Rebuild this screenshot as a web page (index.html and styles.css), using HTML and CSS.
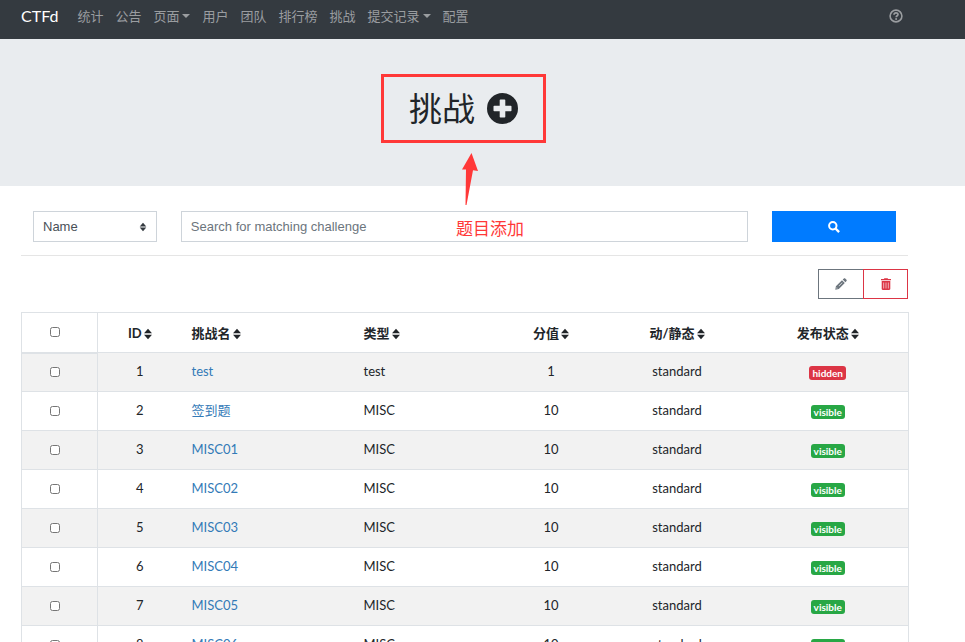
FILE: index.html
```html
<!DOCTYPE html>
<html lang="zh-CN">
<head>
<meta charset="utf-8">
<title>CTFd</title>
<link rel="stylesheet" href="styles.css">
</head>
<body>
<svg class="defs" aria-hidden="true">
  <symbol id="sort" viewBox="0 0 8 12"><path d="M4 .8L8 5.200H0zM4 11.200L0 6.800h8z"/></symbol>
</svg>
<header class="navbar">
  <a class="brand" href="#">CTFd</a>
  <nav class="nav">
    <a href="#">统计</a>
    <a href="#">公告</a>
    <a href="#" class="dropdown">页面</a>
    <a href="#">用户</a>
    <a href="#">团队</a>
    <a href="#">排行榜</a>
    <a href="#">挑战</a>
    <a href="#" class="dropdown">提交记录</a>
    <a href="#">配置</a>
  </nav>
  <a class="help" href="#" aria-label="Help">
    <svg viewBox="0 0 14 14"><circle cx="7" cy="7" r="5.9" fill="none" stroke="currentColor" stroke-width="1.6"/><path d="M5 5.700C5.100 4.400 5.900 3.800 7 3.800c1.200 0 2 .7 2 1.700C9 6.800 7.200 6.700 7.200 8.200" fill="none" stroke="currentColor" stroke-width="1.700"/><circle cx="7.100" cy="10" r="1" fill="currentColor"/></svg>
  </a>
</header>
<main>
  <section class="jumbotron">
    <div class="title">
      <h1>挑战</h1>
      <a class="add" href="#" aria-label="Add challenge">
        <svg viewBox="0 0 31 31"><path fill="currentColor" fill-rule="evenodd" d="M15.500 0a15.500 15.500 0 1 1 0 31a15.500 15.500 0 0 1 0-31zM13.500 6.500a.8.800 0 0 0-.8.800v5.400H7.300a.8.800 0 0 0-.8.800v4a.8.800 0 0 0 .8.800h5.400v5.400a.8.800 0 0 0 .8.800h4a.8.800 0 0 0 .8-.8v-5.400h5.400a.8.800 0 0 0 .8-.8v-4a.8.800 0 0 0-.8-.8h-5.400V7.300a.8.800 0 0 0-.8-.8z"/></svg>
      </a>
      <div class="mark-box"></div>
      <svg class="mark-arrow" viewBox="0 0 16 53"><path fill="#ff3838" d="M9.500 0L16 18l-5-.8L4.500 52h-1L4 16.500H0z"/></svg>
      <div class="mark-label">题目添加</div>
    </div>
  </section>
  <div class="container">
    <form class="search">
      <div class="field select">
        <select aria-label="Field"><option>Name</option></select>
        <svg viewBox="0 0 8 10"><path fill="#343a40" d="M4 .8l3.300 3.700H.7zM4 9.200L.7 5.500h6.600z"/></svg>
      </div>
      <div class="field"><input type="text" aria-label="Search" placeholder="Search for matching challenge"></div>
      <div class="field">
        <button type="button" class="submit" aria-label="Search">
          <svg viewBox="0 0 12 12"><circle cx="4.800" cy="4.800" r="3.700" fill="none" stroke="#fff" stroke-width="2"/><path d="M7.500 7.500l3.600 3.600" stroke="#fff" stroke-width="2.400"/></svg>
        </button>
      </div>
    </form>
    <hr>
    <div class="actions">
      <button type="button" class="edit" aria-label="Edit"><svg viewBox="0 0 12 12"><path fill="currentColor" fill-rule="evenodd" d="M.3 11.700l.6-3.500 6.100-6 2.800 2.800-6 6.100zM1.700 9.300l-.2 1.200 1.200-.2zM3.600 7.900l.4.400 3.500-3.500-.4-.4zM7.700 1.600L8.900.5c.4-.4.9-.4 1.300 0l1.300 1.300c.4.4.4.9 0 1.300l-1.100 1.200z"/></svg></button>
      <button type="button" class="delete" aria-label="Delete"><svg viewBox="0 0 12 12"><path fill="currentColor" fill-rule="evenodd" d="M1 1h2.800l.6-.8h3.200l.6.800H11v1.200H1zM1.700 3h8.600v7.800c0 .7-.4 1.200-1.100 1.200H2.800c-.7 0-1.100-.5-1.100-1.200zM3.500 4.500v6h.6v-6zm2.200 0v6h.6v-6zm2.200 0v6h.6v-6z"/></svg></button>
    </div>
    <table>
      <colgroup><col class="c-check"><col class="c-id"><col class="c-name"><col class="c-type"><col class="c-value"><col class="c-mode"><col class="c-state"></colgroup>
      <thead>
        <tr>
          <th class="check"><input type="checkbox" aria-label="Select all"></th>
          <th>ID<svg><use href="#sort"/></svg></th>
          <th class="left">挑战名<svg><use href="#sort"/></svg></th>
          <th class="left">类型<svg><use href="#sort"/></svg></th>
          <th>分值<svg><use href="#sort"/></svg></th>
          <th>动/静态<svg><use href="#sort"/></svg></th>
          <th>发布状态<svg><use href="#sort"/></svg></th>
        </tr>
      </thead>
      <tbody>
        <tr><td class="check"><input type="checkbox" aria-label="Select 1"></td><td>1</td><td class="left"><a href="#">test</a></td><td class="left">test</td><td>1</td><td>standard</td><td><span class="badge hidden">hidden</span></td></tr>
        <tr><td class="check"><input type="checkbox" aria-label="Select 2"></td><td>2</td><td class="left"><a href="#">签到题</a></td><td class="left">MISC</td><td>10</td><td>standard</td><td><span class="badge">visible</span></td></tr>
        <tr><td class="check"><input type="checkbox" aria-label="Select 3"></td><td>3</td><td class="left"><a href="#">MISC01</a></td><td class="left">MISC</td><td>10</td><td>standard</td><td><span class="badge">visible</span></td></tr>
        <tr><td class="check"><input type="checkbox" aria-label="Select 4"></td><td>4</td><td class="left"><a href="#">MISC02</a></td><td class="left">MISC</td><td>10</td><td>standard</td><td><span class="badge">visible</span></td></tr>
        <tr><td class="check"><input type="checkbox" aria-label="Select 5"></td><td>5</td><td class="left"><a href="#">MISC03</a></td><td class="left">MISC</td><td>10</td><td>standard</td><td><span class="badge">visible</span></td></tr>
        <tr><td class="check"><input type="checkbox" aria-label="Select 6"></td><td>6</td><td class="left"><a href="#">MISC04</a></td><td class="left">MISC</td><td>10</td><td>standard</td><td><span class="badge">visible</span></td></tr>
        <tr><td class="check"><input type="checkbox" aria-label="Select 7"></td><td>7</td><td class="left"><a href="#">MISC05</a></td><td class="left">MISC</td><td>10</td><td>standard</td><td><span class="badge">visible</span></td></tr>
        <tr><td class="check"><input type="checkbox" aria-label="Select 8"></td><td>8</td><td class="left"><a href="#">MISC06</a></td><td class="left">MISC</td><td>10</td><td>standard</td><td><span class="badge">visible</span></td></tr>
      </tbody>
    </table>
  </div>
</main>
</body>
</html>
```
FILE: styles.css
```css
* { box-sizing: border-box; }
body {
  margin: 0;
  height: 100vh;
  overflow: hidden;
  background: #fff;
  color: #212529;
  font: 13px/20px Lato, "Noto Sans CJK SC", sans-serif;
}
a { color: #337ab7; text-decoration: none; }
.defs { display: none; }

.navbar {
  display: flex;
  align-items: flex-start;
  height: 39px;
  padding: 6px 62px 0 21px;
  background: #343a40;
}
.brand { color: #fff; font-size: 16px; margin-right: 13px; }
.nav { display: flex; }
.nav a { padding: 0 6px; color: #9a9da0; }
.dropdown::after {
  content: "";
  display: inline-block;
  margin-left: 3px;
  vertical-align: 3px;
  border: 4px solid transparent;
  border-top-color: currentColor;
  border-bottom: 0;
}
.help { margin: 3px 0 0 auto; color: #9a9da0; }
.help svg { display: block; width: 14px; height: 14px; }

.jumbotron {
  display: flex;
  justify-content: center;
  padding: 45px 38px 53px 0;
  background: #e9ecef;
}
.title { position: relative; z-index: 1; display: flex; align-items: center; gap: 12px; }
h1 { margin: 0; font-size: 33px; line-height: 49px; font-weight: 400; }
.add { color: #212529; }
.add svg { display: block; width: 31px; height: 31px; }
.mark-box {
  position: absolute;
  inset: -10px -28px;
  border: 3px solid #ff3838;
  pointer-events: none;
}
.mark-arrow { position: absolute; left: 53px; top: 69px; width: 16px; height: 53px; }
.mark-label {
  position: absolute;
  left: 47px;
  top: 133px;
  color: #ff3838;
  font-size: 17px;
  line-height: 24px;
  white-space: nowrap;
}

.container { margin: 25px 57px 0 21px; }
.search { display: grid; grid-template-columns: 2fr 8fr 2fr; }
.field { position: relative; padding: 0 12px; }
.field select, .field input, .submit {
  display: block;
  width: 100%;
  height: 31px;
  border: 1px solid #ced4da;
  border-radius: 0;
  padding: 0 9px;
  background: #fff;
  color: #495057;
  font: 13px "Liberation Sans", sans-serif;
}
.field select { appearance: none; }
.field input::placeholder { color: #6c757d; opacity: 1; }
.select svg { position: absolute; right: 22px; top: 11px; width: 8px; height: 10px; pointer-events: none; }
.field .submit { background: #007bff; border-color: #007bff; }
.submit svg { display: block; width: 12px; height: 12px; margin: 0 auto; }
hr { margin: 13px 0; border: 0; border-top: 1px solid #e5e5e5; }
.actions { display: flex; justify-content: flex-end; margin-bottom: 13px; }
.actions button {
  width: 46px;
  height: 30px;
  padding: 0;
  border: 1px solid;
  background: #fff;
}
.actions svg { display: block; width: 12px; height: 12px; margin: 0 auto; }
.edit { color: #6c757d; }
.actions .delete { width: 45px; margin-left: -1px; color: #dc3545; }

table {
  width: 100%;
  table-layout: fixed;
  border-collapse: collapse;
  border: 1px solid #dee2e6;
  text-align: center;
}
.c-check { width: 76px; }
.c-id { width: 84px; }
.c-name { width: 172px; }
.c-type { width: 142px; }
.c-value { width: 111px; }
.c-mode { width: 141px; }
.c-state { width: 161px; }
th, td { height: 39px; padding: 0 10px; border-top: 1px solid #dee2e6; }
td { padding-bottom: 2px; }
th { height: 40px; font-weight: 700; }
th svg { width: 8px; height: 12px; margin-left: 2px; vertical-align: -2px; fill: #212529; }
.left { text-align: left; }
.check { border-right: 1px solid #dee2e6; padding: 0 19px 0 10px; }
th.check { border-bottom: 2px solid #dee2e6; }
.check input { display: block; width: 10px; height: 10px; margin: 0 auto; }
tbody tr:nth-child(odd) { background: #f2f2f2; }
.badge {
  display: inline-block;
  padding: 2px 3px;
  border-radius: 3px;
  background: #28a745;
  color: #fff;
  font-size: 10px;
  font-weight: 700;
  line-height: 10px;
  vertical-align: middle;
}
.hidden { background: #dc3545; }
```
